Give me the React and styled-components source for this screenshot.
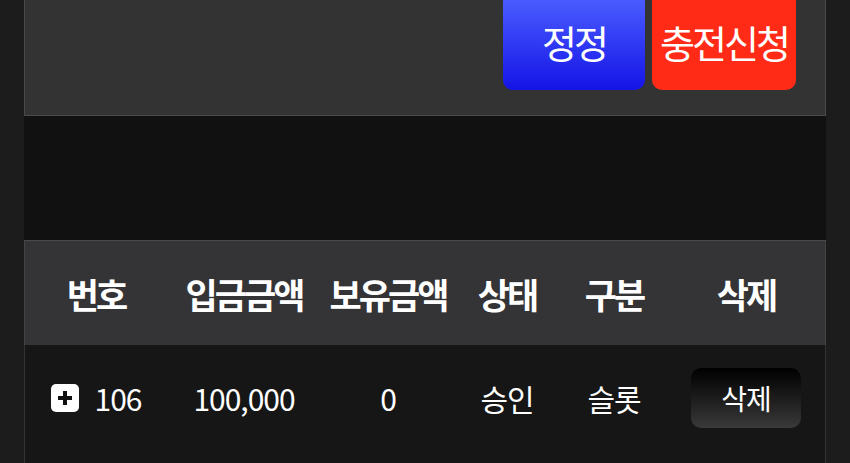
import React from 'react';
import styled, {createGlobalStyle} from 'styled-components';

const GlobalStyle = createGlobalStyle`
    *, *::before, *::after {
        box-sizing: border-box;
    }
    body {
        margin: 0;
        background: #1c1c1c;
        font-family: "Noto Sans CJK KR", "Noto Sans", sans-serif;
        color: #fff;
    }
`;

const Page = styled.div`
    width: 802px;
    margin-left: 24px;
    height: 463px;
    overflow: hidden;
`;

const Toolbar = styled.div`
    height: 116px;
    background: #333333;
    border: 1px solid #4a4a4a;
    border-top: none;
    display: flex;
    justify-content: flex-end;
    align-items: flex-start;
    gap: 7px;
    padding-right: 29px;
`;

const ActionButton = styled.button`
    width: ${p => p.w}px;
    height: 90px;
    border: none;
    border-radius: 0 0 10px 10px;
    background: ${p => p.bg};
    color: #fff;
    font-family: inherit;
    font-size: 38px;
    letter-spacing: -3px;
    padding: 0 0 8px;
    white-space: nowrap;
    cursor: pointer;
`;

const Spacer = styled.div`
    height: 124px;
    background: #111111;
`;

const Grid = styled.div`
    display: grid;
    grid-template-columns: 142px 154px 134px 104px 110px 154px;
    align-items: center;
    justify-items: center;
    border-left: 1px solid #444;
    border-right: 1px solid #444;
`;

const HeadRow = styled(Grid)`
    height: 105px;
    background: #343335;
    border-top: 1px solid #4a4a4a;
    font-size: 35px;
    font-weight: 700;
    letter-spacing: -3px;
    white-space: nowrap;
`;

const BodyRow = styled(Grid)`
    height: 118px;
    background: #161616;
    border-color: #333;
    font-size: 30px;
    letter-spacing: -1px;
    padding-bottom: 12px;
`;

const IdCell = styled.div`
    display: flex;
    align-items: center;
    gap: 16px;
`;

const DeleteButton = styled.button`
    width: 110px;
    height: 60px;
    border: none;
    border-radius: 10px;
    background: linear-gradient(#000 0%, #1c1c1c 50%, #3a393b 100%);
    color: #fff;
    font-family: inherit;
    font-size: 28px;
    letter-spacing: -1px;
    cursor: pointer;
`;

const PlusIcon = () => (
    <svg width="28" height="28" viewBox="0 0 28 28">
        <rect width="28" height="28" rx="5" fill="#fff" />
        <path d="M14 7v14M7 14h14" stroke="#111" strokeWidth="4" />
    </svg>
);

const columns = ['번호', '입금금액', '보유금액', '상태', '구분', '삭제'];

const rows = [
    {id: 106, amount: 100000, balance: 0, status: '승인', kind: '슬롯'},
];

export default function App() {
    return (
        <Page>
            <GlobalStyle />
            <Toolbar>
                <ActionButton w={142} bg="linear-gradient(#4a5cff, #1414e6)">정정</ActionButton>
                <ActionButton w={144} bg="#ff2b17">충전신청</ActionButton>
            </Toolbar>
            <Spacer />
            <HeadRow>
                {columns.map(c => <div key={c}>{c}</div>)}
            </HeadRow>
            {rows.map(r => (
                <BodyRow key={r.id}>
                    <IdCell><PlusIcon />{r.id}</IdCell>
                    <div>{r.amount.toLocaleString('en-US')}</div>
                    <div>{r.balance}</div>
                    <div>{r.status}</div>
                    <div>{r.kind}</div>
                    <DeleteButton>삭제</DeleteButton>
                </BodyRow>
            ))}
        </Page>
    );
}
